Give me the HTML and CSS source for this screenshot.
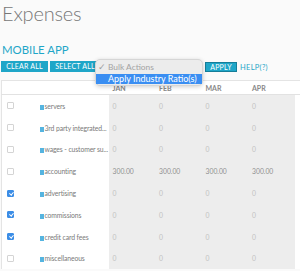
FILE: index.html
```html
<!DOCTYPE html>
<html lang="en">
<head>
    <meta charset="UTF-8">
    <meta name="viewport" content="width=device-width, initial-scale=1.0">
    <title>Expenses</title>
    <link rel="stylesheet" href="styles.css">
</head>
<body>
    <div class="page">
        <h1>Expenses</h1>
        <h2>MOBILE APP</h2>

        <div class="toolbar">
            <button class="btn clear">CLEAR ALL</button>
            <button class="btn select">SELECT ALL</button>
            <div class="bulk">
                <div class="menu">
                    <div class="menu-item muted"><span class="tick">&#10003;</span>Bulk Actions</div>
                    <div class="menu-item active">Apply Industry Ratio(s)</div>
                </div>
            </div>
            <button class="btn apply">APPLY</button>
            <a class="help">HELP(?)</a>
        </div>

        <table class="grid">
            <colgroup>
                <col class="c-check">
                <col class="c-name">
                <col class="c-month">
                <col class="c-month">
                <col class="c-month">
                <col class="c-month">
                <col class="c-edge">
            </colgroup>
            <thead>
                <tr>
                    <th></th>
                    <th></th>
                    <th>JAN</th>
                    <th>FEB</th>
                    <th>MAR</th>
                    <th>APR</th>
                    <th class="edge"></th>
                </tr>
            </thead>
            <tbody>
                <tr>
                    <td><span class="box"></span></td>
                    <td class="name"><i></i>servers</td>
                    <td class="val">0</td><td class="val">0</td><td class="val">0</td><td class="val">0</td><td></td>
                </tr>
                <tr>
                    <td><span class="box"></span></td>
                    <td class="name"><i></i>3rd party integrated...</td>
                    <td class="val">0</td><td class="val">0</td><td class="val">0</td><td class="val">0</td><td></td>
                </tr>
                <tr>
                    <td><span class="box"></span></td>
                    <td class="name"><i></i>wages - customer su...</td>
                    <td class="val">0</td><td class="val">0</td><td class="val">0</td><td class="val">0</td><td></td>
                </tr>
                <tr>
                    <td><span class="box"></span></td>
                    <td class="name"><i></i>accounting</td>
                    <td class="val set">300.00</td><td class="val set">300.00</td><td class="val set">300.00</td><td class="val set">300.00</td><td></td>
                </tr>
                <tr>
                    <td><span class="box on"></span></td>
                    <td class="name"><i></i>advertising</td>
                    <td class="val">0</td><td class="val">0</td><td class="val">0</td><td class="val">0</td><td></td>
                </tr>
                <tr>
                    <td><span class="box on"></span></td>
                    <td class="name"><i></i>commissions</td>
                    <td class="val">0</td><td class="val">0</td><td class="val">0</td><td class="val">0</td><td></td>
                </tr>
                <tr>
                    <td><span class="box on"></span></td>
                    <td class="name"><i></i>credit card fees</td>
                    <td class="val">0</td><td class="val">0</td><td class="val">0</td><td class="val">0</td><td></td>
                </tr>
                <tr>
                    <td><span class="box"></span></td>
                    <td class="name"><i></i>miscellaneous</td>
                    <td class="val">0</td><td class="val">0</td><td class="val">0</td><td class="val">0</td><td></td>
                </tr>
            </tbody>
        </table>
    </div>
</body>
</html>
```

FILE: styles.css
```css
body {
    margin: 0;
    font-family: Lato, "Open Sans", sans-serif;
    background: #fafafa;
    overflow: hidden;
}
.page {
    padding-left: 1px;
}
h1 {
    margin: 0;
    font-size: 20px;
    line-height: 26px;
    font-weight: 300;
    letter-spacing: -0.2px;
    color: #777;
    padding-left: 1px;
}
h2 {
    margin: 17px 0 0;
    font-size: 11.4px;
    line-height: 14px;
    font-weight: 400;
    color: #1fa6c8;
    padding-left: 1px;
}
.toolbar {
    display: flex;
    align-items: flex-start;
    margin-top: 4px;
    height: 11px;
}
.btn {
    font-family: inherit;
    font-size: 7px;
    letter-spacing: 0.2px;
    line-height: 11px;
    height: 11px;
    padding: 0;
    border: 0;
    background: #1fa6c8;
    color: #fff;
    text-align: center;
    white-space: nowrap;
}
.btn.clear {
    width: 47px;
    margin-right: 2px;
}
.btn.select {
    width: 50px;
}
.btn.apply {
    width: 32px;
    height: 10px;
    line-height: 8px;
    margin-top: 1px;
    border: 1px solid #157d99;
    margin-right: 3px;
}
.help {
    font-size: 7.5px;
    line-height: 11px;
    color: #1fa6c8;
    letter-spacing: 0.3px;
    margin-top: 1px;
}
.bulk {
    position: relative;
    width: 105px;
}
.menu {
    position: absolute;
    left: -5px;
    top: -2px;
    width: 108px;
    height: 27px;
    background: #ececec;
    border: 1px solid #d6d6d6;
    border-radius: 5px;
    box-shadow: 0 1px 4px rgba(0,0,0,0.18);
    z-index: 2;
    padding-top: 2px;
    box-sizing: border-box;
}
.menu-item {
    font-size: 9px;
    line-height: 10px;
    height: 10px;
    padding-left: 12px;
    position: relative;
}
.menu-item.muted {
    color: #a3a3a3;
    margin-bottom: 2px;
    font-size: 8.4px;
}
.tick {
    position: absolute;
    left: 2px;
    top: 0;
    font-size: 9px;
    color: #9d9d9d;
}
.menu-item.active {
    background: #3a8ef2;
    color: #fff;
}
.grid {
    margin-top: 8px;
    width: 299px;
    border-collapse: collapse;
    table-layout: fixed;
    background: #fff;
    border-top: 1px solid #e4e4e4;
    border-left: 1px solid #e4e4e4;
}
.c-check { width: 34px; }
.c-name { width: 73px; }
.c-month { width: 46.5px; }
.c-edge { width: 6px; }
th {
    height: 13px;
    padding: 0 0 0 4px;
    font-size: 7px;
    font-weight: 700;
    color: #888;
    text-align: left;
    background: #fff;
    border-bottom: 1px solid #e2e2e2;
    vertical-align: bottom;
    line-height: 11px;
}
th.edge {
    border-right: 2px solid #5cc3de;
}
td {
    height: 21.8px;
    padding: 0;
    font-size: 6.8px;
    color: #888;
    white-space: nowrap;
    overflow: hidden;
}
td.name {
    padding-left: 4px;
    color: #7a7a7a;
    letter-spacing: -0.1px;
}
td.name i {
    display: inline-block;
    width: 4px;
    height: 5px;
    background: #55b4e0;
    margin-right: 1px;
    vertical-align: -1px;
}
td.val {
    background: #ededed;
    padding-left: 4px;
    color: #c2c2c2;
}
td.val.set {
    color: #909090;
}
.box {
    display: block;
    width: 5px;
    height: 5px;
    margin-left: 5px;
    border: 1px solid #d4d4d4;
    border-radius: 1px;
    background: #fff;
}
.box.on {
    background: #3b8de6;
    border-color: #3b8de6;
    position: relative;
}
.box.on::after {
    content: "";
    position: absolute;
    left: 1.5px;
    top: 0;
    width: 1.5px;
    height: 3px;
    border: solid #fff;
    border-width: 0 1px 1px 0;
    transform: rotate(40deg);
}
```
